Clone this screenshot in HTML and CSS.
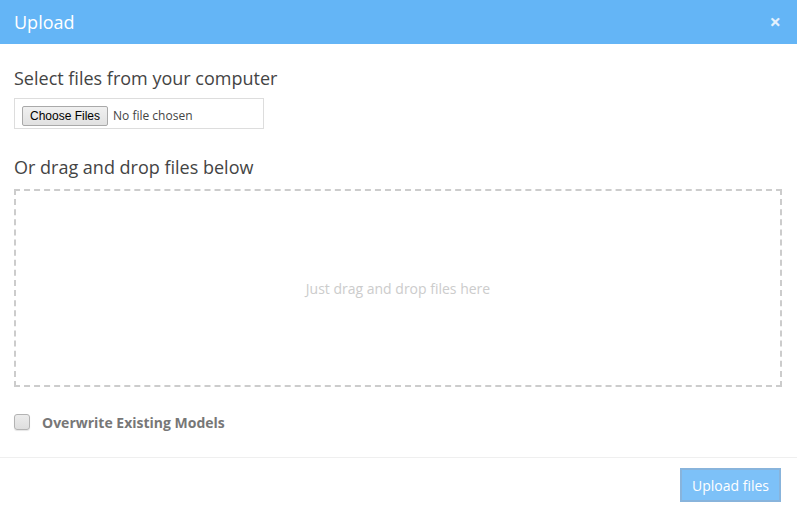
FILE: index.html
```html
<!DOCTYPE html>
<html>
<head>
<meta charset="utf-8">
<link rel="stylesheet" href="styles.css">
</head>
<body>
<div class="modal">
  <div class="modal-header">
    <span class="modal-title">Upload</span>
    <span class="close">×</span>
  </div>
  <div class="modal-body">
    <h4 class="section-title">Select files from your computer</h4>
    <div class="file-box">
      <span class="file-btn">Choose Files</span>
      <span class="file-text">No file chosen</span>
    </div>
    <h4 class="section-title second">Or drag and drop files below</h4>
    <div class="dropzone">Just drag and drop files here</div>
    <label class="check-row">
      <span class="checkbox"></span>
      <span class="check-label">Overwrite Existing Models</span>
    </label>
  </div>
  <div class="modal-footer">
    <button class="upload-btn">Upload files</button>
  </div>
</div>
</body>
</html>
```
FILE: styles.css
```css
* { box-sizing: border-box; }
html, body { margin: 0; padding: 0; background: #fff; }
body { font-family: "Open Sans", sans-serif; color: #444; width: 797px; height: 512px; overflow: hidden; }
.modal { width: 797px; }
.modal-header {
  height: 44px;
  background: #64b5f6;
  display: flex;
  align-items: center;
  justify-content: space-between;
  padding: 0 16px 0 14px;
}
.modal-title { color: #fff; font-size: 18px; line-height: 24px; }
.close { color: #e3f1fd; font-size: 20px; font-weight: bold; line-height: 20px; }
.modal-body { padding: 22px 15px 0 14px; }
.section-title { margin: 0; font-size: 18px; font-weight: normal; line-height: 24px; color: #444; }
.section-title.second { margin-top: 26px; }
.file-box {
  margin-top: 8px;
  width: 250px;
  height: 31px;
  border: 1px solid #ddd;
  display: flex;
  align-items: flex-start;
  padding: 7px 7px 0;
}
.file-btn {
  font-family: "Liberation Sans", Arial, sans-serif;
  font-size: 12px;
  color: #000;
  height: 20px;
  line-height: 18px;
  padding: 0 7px;
  border: 1px solid #a9a9a9;
  border-radius: 2px;
  background: linear-gradient(#f0f0f0, #e1e1e1);
}
.file-text { font-size: 12px; color: #444; margin-left: 5px; line-height: 20px; }
.dropzone {
  margin-top: 10px;
  height: 198px;
  border: 2px dashed #ccc;
  display: flex;
  align-items: center;
  justify-content: center;
  color: #ccc;
  font-size: 14px;
}
.check-row { display: flex; align-items: center; margin-top: 26px; height: 18px; }
.checkbox {
  width: 16px; height: 16px;
  border: 1px solid #b3b3b3;
  border-radius: 3px;
  background: linear-gradient(#ececec, #dedede);
  box-shadow: 0 1px 1px rgba(0,0,0,0.1);
}
.check-label { margin-left: 12px; font-size: 14px; font-weight: bold; color: #777; }
.modal-footer {
  margin-top: 26px;
  border-top: 1px solid #efefef;
  padding: 10px 16px 0 0;
  display: flex;
  justify-content: flex-end;
}
.upload-btn {
  font-family: "Open Sans", sans-serif;
  width: 101px;
  height: 34px;
  background: #7dc1f8;
  border: 2px solid #88b4dc;
  color: #fff;
  font-size: 14px;
  padding: 0;
}
```
